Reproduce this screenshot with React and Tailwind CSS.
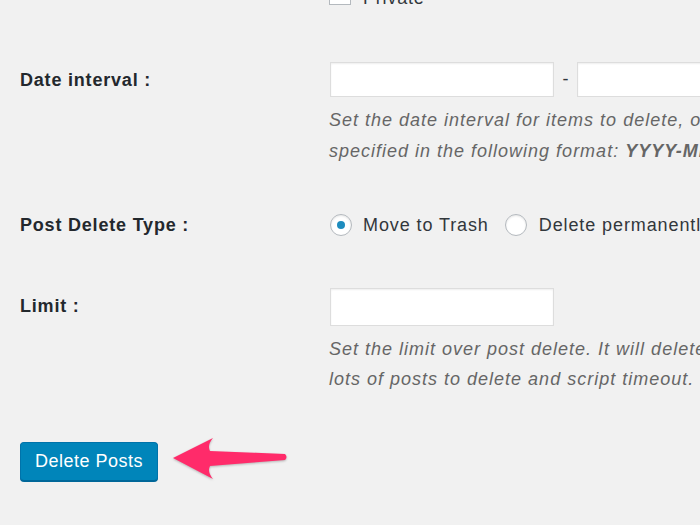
import React from 'react';

function Row({ label, children, className = '' }) {
  return (
    <div className={`grid grid-cols-[310px_1fr] ${className}`}>
      <div className="pl-5 text-[18px] font-bold text-[#23282d] leading-[36px] tracking-[0.8px]">{label}</div>
      <div className="min-w-0">{children}</div>
    </div>
  );
}

function TextBox({ className = '' }) {
  return (
    <div
      className={`bg-white border border-[#dddddd] shadow-[inset_0_1px_2px_rgba(0,0,0,0.07)] shrink-0 ${className}`}
    />
  );
}

function Radio({ checked }) {
  return (
    <span className="w-[22px] h-[22px] rounded-full border border-[#b4b9be] bg-white shadow-[inset_0_1px_2px_rgba(0,0,0,0.1)] flex items-center justify-center shrink-0">
      {checked && <span className="w-[8px] h-[8px] rounded-full bg-[#1e8cbe]" />}
    </span>
  );
}

export default function App() {
  return (
    <div
      className="w-[700px] h-[525px] bg-[#f1f1f1] overflow-hidden relative"
      style={{ fontFamily: '"Liberation Sans", Arial, sans-serif' }}
    >
      <div className="-mt-[17px]">
        <Row label="">
          <div className="flex items-start ml-[19px] h-[22px]">
            <span className="w-[22px] h-[22px] border border-[#b4b9be] bg-white shrink-0" />
            <span className="ml-[12px] mt-[4px] leading-[22px] text-[18px] text-[#32373c] tracking-[0.8px]">Private</span>
          </div>
        </Row>

        <Row label="Date interval :" className="mt-[57px]">
          <div className="ml-[20px] whitespace-nowrap">
            <div className="flex items-center">
              <TextBox className="w-[224px] h-[35px]" />
              <span className="w-[23px] shrink-0 text-center text-[18px] text-[#32373c]">-</span>
              <TextBox className="w-[224px] h-[35px]" />
            </div>
            <p className="mt-[8px] text-[18px] italic text-[#666666] leading-[31px] tracking-[1px] -ml-[1px]">
              Set the date interval for items to delete, or leave these fields blank to select all posts. The dates must be
              <br />
              specified in the following format: <b>YYYY-MM-DD</b>
            </p>
          </div>
        </Row>

        <Row label="Post Delete Type :" className="mt-[40px]">
          <div className="ml-[20px] flex items-center h-[36px] whitespace-nowrap text-[18px] text-[#32373c] tracking-[0.9px]">
            <Radio checked />
            <span className="ml-[11px]">Move to Trash</span>
            <span className="ml-[16px]"><Radio /></span>
            <span className="ml-[12px]">Delete permanently</span>
          </div>
        </Row>

        <Row label="Limit :" className="mt-[45px]">
          <div className="ml-[20px] whitespace-nowrap">
            <TextBox className="w-[224px] h-[38px]" />
            <p className="mt-[8px] text-[18px] italic text-[#666666] leading-[30px] tracking-[1px] -ml-[1px]">
              Set the limit over post delete. It will delete only first limit posts. This option will help you in case you have
              <br />
              lots of posts to delete and script timeout.
            </p>
          </div>
        </Row>

        <div className="pl-5 mt-[48px] relative">
          <button className="w-[138px] h-[39px] rounded-[4px] bg-[#0085ba] border border-[#0073aa] border-b-[#006799] shadow-[0_1px_0_#006799] text-white text-[18px] tracking-[0.5px]">
            Delete Posts
          </button>
          <svg
            className="absolute left-[170px] top-[-7px]"
            width="122"
            height="48"
            viewBox="170 432 122 48"
          >
            <path
              d="M173,455 L213,435 Q207,442 210,448 L285,451 Q288,454 285,457 L210,463 Q207,469 213,476 Z"
              fill="#ff2b6a"
              style={{ filter: 'drop-shadow(0 1px 1px rgba(0,0,0,0.25))' }}
            />
          </svg>
        </div>
      </div>
    </div>
  );
}
